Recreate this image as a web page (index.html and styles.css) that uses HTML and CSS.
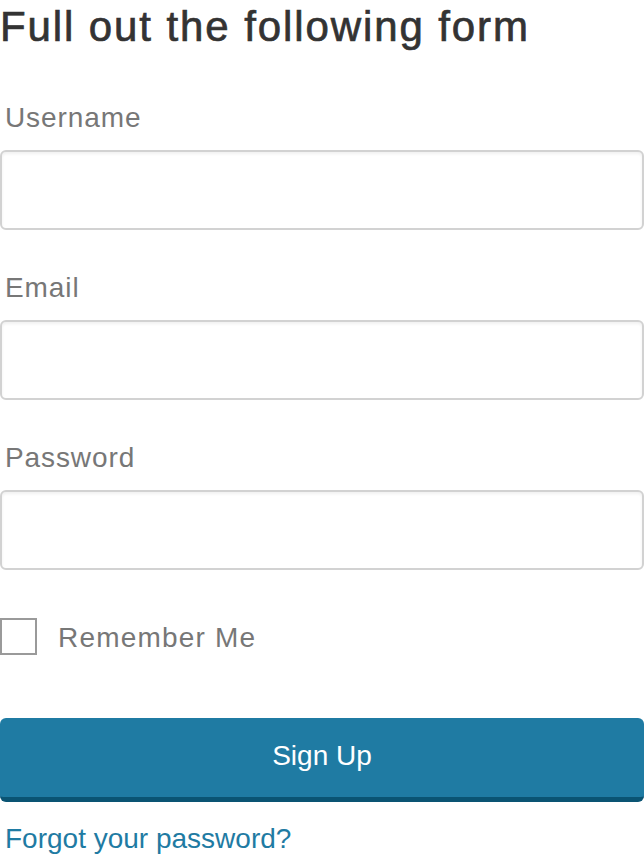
FILE: index.html
```html
<!DOCTYPE html>
<html>
<head>
<meta charset="utf-8">
<link rel="stylesheet" href="styles.css">
</head>
<body>
<form class="form">
  <h1 class="title">Full out the following form</h1>
  <div class="field">
    <label class="label">Username</label>
    <input class="input" type="text">
  </div>
  <div class="field">
    <label class="label">Email</label>
    <input class="input" type="text">
  </div>
  <div class="field">
    <label class="label">Password</label>
    <input class="input" type="password">
  </div>
  <label class="remember"><span class="checkbox"></span><span class="remember-text">Remember Me</span></label>
  <button class="button" type="button">Sign Up</button>
  <a class="link" href="#">Forgot your password?</a>
</form>
</body>
</html>
```

FILE: styles.css
```css
html, body {
  margin: 0;
  padding: 0;
  background: #fff;
}
body {
  font-family: "Liberation Sans", Arial, sans-serif;
}
.form {
  display: flex;
  flex-direction: column;
  width: 644px;
}
.title {
  margin: 0;
  font-size: 42px;
  font-weight: normal;
  color: #333;
  line-height: 54px;
  letter-spacing: 1.9px;
  -webkit-text-stroke: 0.7px #333;
}
.field {
  display: flex;
  flex-direction: column;
  margin-top: 44px;
}
.field + .field {
  margin-top: 0;
}
.label {
  font-size: 28px;
  color: #777;
  padding-left: 5px;
  line-height: 40px;
  letter-spacing: 0.9px;
  margin-bottom: 12px;
}
.input {
  box-sizing: border-box;
  height: 80px;
  width: 644px;
  margin: 0 0 38px 0;
  border: 2px solid #d2d2d2;
  border-radius: 6px;
  box-shadow: inset 0 2px 3px rgba(0,0,0,0.06);
  background: #fff;
  outline: none;
}
.remember {
  display: flex;
  align-items: center;
  margin-top: 10px;
  height: 36px;
}
.checkbox {
  box-sizing: border-box;
  width: 37px;
  height: 37px;
  border: 2px solid #9a9a9a;
}
.remember-text {
  margin-left: 21px;
  padding-top: 4px;
  font-size: 28px;
  color: #777;
  letter-spacing: 1.2px;
}
.button {
  box-sizing: border-box;
  margin-top: 64px;
  height: 84px;
  width: 644px;
  border: none;
  border-bottom: 5px solid #0a5473;
  border-radius: 6px;
  background: #1f7ba3;
  color: #fff;
  font-family: "Liberation Sans", Arial, sans-serif;
  font-size: 28px;
  padding: 0 0 4px 0;
}
.link {
  margin-top: 20px;
  padding-left: 5px;
  font-size: 28px;
  color: #1f7ba3;
  text-decoration: none;
  line-height: 34px;
}
```
